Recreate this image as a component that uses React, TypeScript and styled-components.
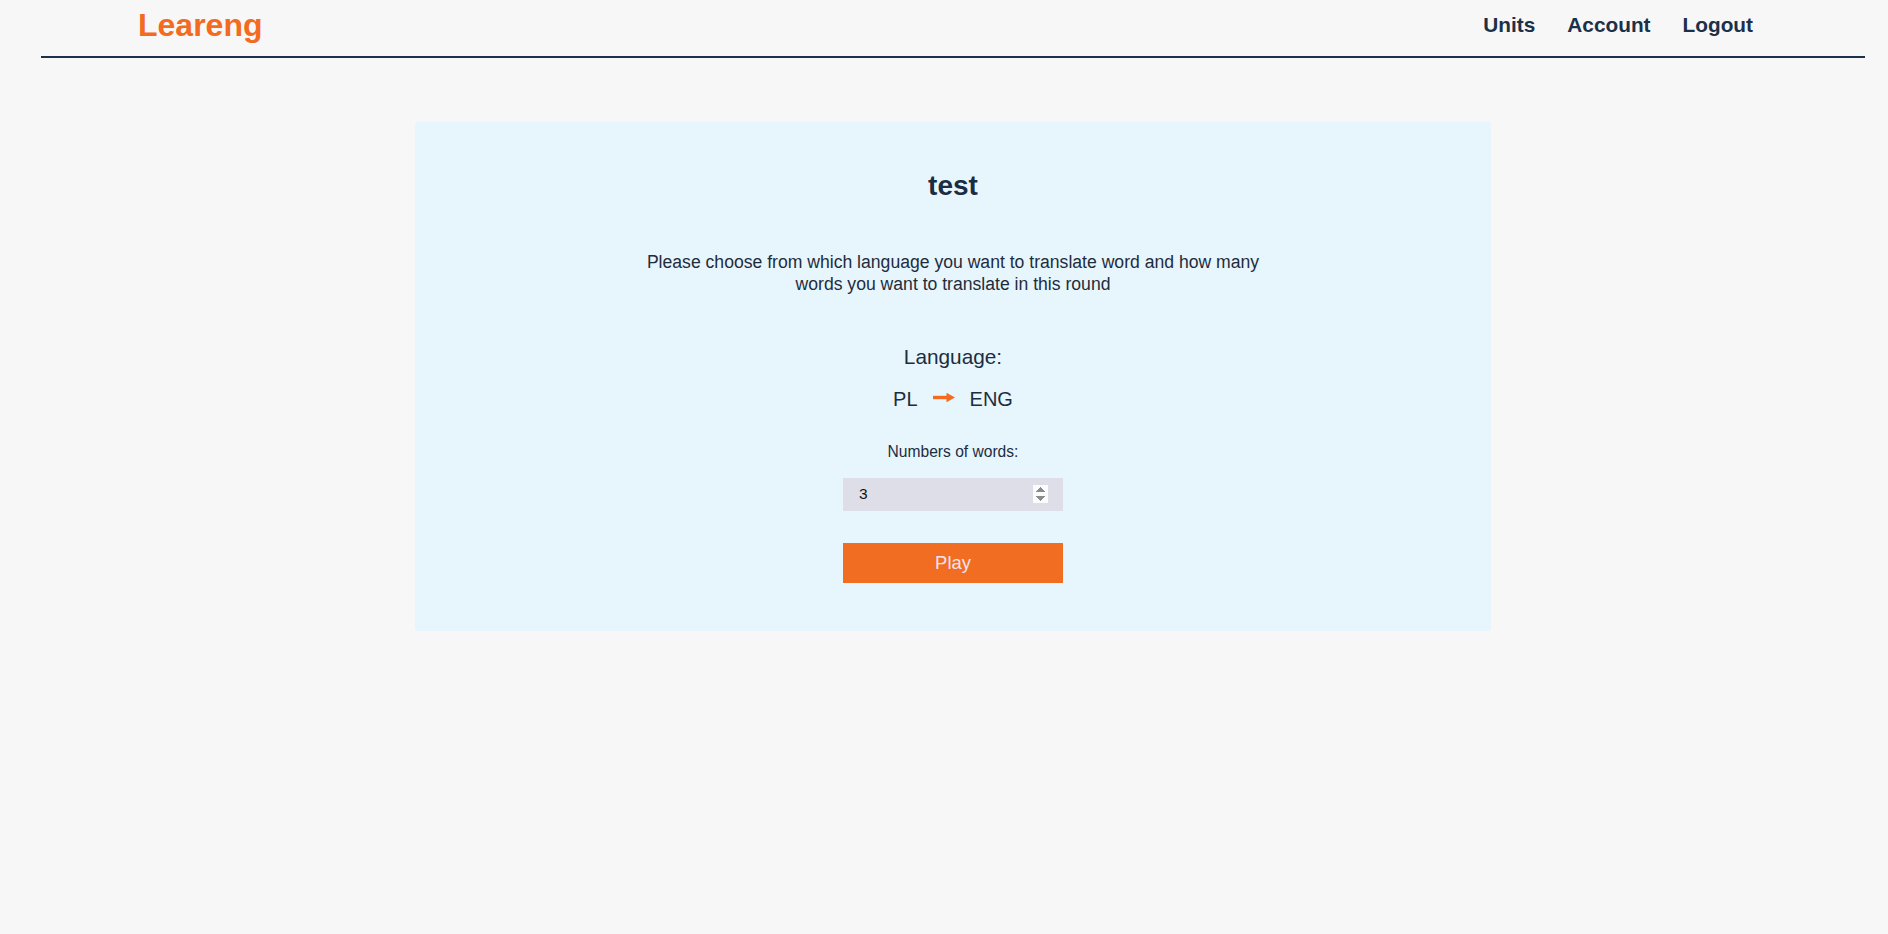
import React from "react";
import styled, { createGlobalStyle } from "styled-components";

const GlobalStyle = createGlobalStyle`
  html, body {
    margin: 0;
    padding: 0;
    background: #f7f7f7;
    font-family: "Liberation Sans", Arial, sans-serif;
  }
  * { box-sizing: border-box; }
`;

const Page = styled.div`
  margin: 0 23px 0 41px;
`;

const Header = styled.header`
  display: flex;
  justify-content: space-between;
  align-items: center;
  height: 58px;
  padding: 0 112px 6px 97px;
  border-bottom: 2px solid #1b3049;
`;

const Logo = styled.div`
  font-size: 32px;
  line-height: 36px;
  font-weight: 700;
  color: #f26b21;
`;

const Nav = styled.nav`
  display: flex;
  gap: 32px;
`;

const NavLink = styled.a`
  font-size: 20.8px;
  line-height: 24px;
  font-weight: 700;
  color: #1b3049;
  text-decoration: none;
  cursor: pointer;
`;

const Main = styled.main`
  display: flex;
  justify-content: center;
  padding-top: 64px;
`;

const Card = styled.section`
  width: 1076px;
  background: #e7f5fd;
  border-radius: 3px;
  padding: 48px 0 48px;
  display: flex;
  flex-direction: column;
  align-items: center;
  color: #1c2d40;
`;

const Title = styled.h2`
  margin: 0;
  font-size: 28px;
  line-height: 32px;
  font-weight: 700;
  color: #1b2d42;
`;

const Description = styled.p`
  margin: 48.5px 0 0;
  max-width: 640px;
  text-align: center;
  font-size: 17.6px;
  line-height: 22.7px;
  color: #1e2c3c;
`;

const LanguageLabel = styled.div`
  margin-top: 49.5px;
  font-size: 20.8px;
  line-height: 24px;
`;

const LanguageRow = styled.div`
  margin-top: 17.5px;
  display: flex;
  align-items: center;
  gap: 15px;
  font-size: 20px;
  line-height: 24px;
`;

const ArrowIcon = styled.svg`
  display: block;
  margin-top: -2px;
`;

const WordsLabel = styled.label`
  margin-top: 31.3px;
  font-size: 15.6px;
  line-height: 20px;
`;

const NumberInput = styled.input`
  margin-top: 15.4px;
  width: 220px;
  height: 33px;
  border: none;
  outline: none;
  background: #dedee8;
  padding: 0 15px 0 16px;
  font-family: "Liberation Sans", Arial, sans-serif;
  font-size: 15.5px;
  color: #111;
  caret-color: #111;
  &::-webkit-inner-spin-button,
  &::-webkit-outer-spin-button {
    opacity: 1;
  }
`;

const PlayButton = styled.button`
  margin-top: 32px;
  width: 220px;
  height: 40px;
  border: none;
  background: #f16d22;
  color: #f3e4ef;
  font-family: "Liberation Sans", Arial, sans-serif;
  font-size: 18.4px;
  cursor: pointer;
`;

const Arrow = () => (
  <ArrowIcon width="22" height="11" viewBox="0 0 22 11">
    <rect x="0" y="3.8" width="15" height="3.4" fill="#f26b21" />
    <polygon points="13.5,0.8 22,5.5 13.5,10.2" fill="#f26b21" />
  </ArrowIcon>
);

export default function App() {
  return (
    <>
      <GlobalStyle />
      <Page>
        <Header>
          <Logo>Leareng</Logo>
          <Nav>
            <NavLink>Units</NavLink>
            <NavLink>Account</NavLink>
            <NavLink>Logout</NavLink>
          </Nav>
        </Header>
        <Main>
          <Card>
            <Title>test</Title>
            <Description>
              Please choose from which language you want to translate word and how many words you
              want to translate in this round
            </Description>
            <LanguageLabel>Language:</LanguageLabel>
            <LanguageRow>
              <span>PL</span>
              <Arrow />
              <span>ENG</span>
            </LanguageRow>
            <WordsLabel htmlFor="words">Numbers of words:</WordsLabel>
            <NumberInput id="words" type="number" defaultValue={3} min={1} autoFocus />
            <PlayButton>Play</PlayButton>
          </Card>
        </Main>
      </Page>
    </>
  );
}
